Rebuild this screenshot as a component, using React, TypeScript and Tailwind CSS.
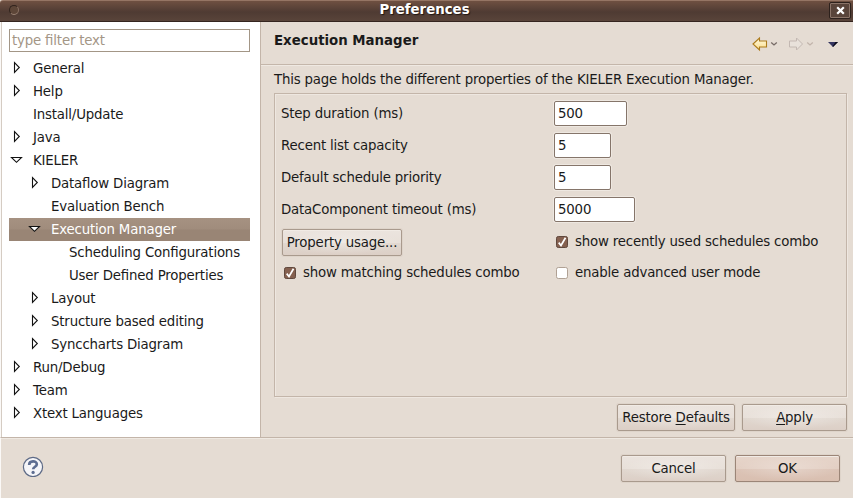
import type { ReactNode } from 'react';

type TreeItem = { label: string; depth: 0 | 1 | 2; state?: 'open' | 'closed'; selected?: boolean };

const tree: TreeItem[] = [
  { label: 'General', depth: 0, state: 'closed' },
  { label: 'Help', depth: 0, state: 'closed' },
  { label: 'Install/Update', depth: 0 },
  { label: 'Java', depth: 0, state: 'closed' },
  { label: 'KIELER', depth: 0, state: 'open' },
  { label: 'Dataflow Diagram', depth: 1, state: 'closed' },
  { label: 'Evaluation Bench', depth: 1 },
  { label: 'Execution Manager', depth: 1, state: 'open', selected: true },
  { label: 'Scheduling Configurations', depth: 2 },
  { label: 'User Defined Properties', depth: 2 },
  { label: 'Layout', depth: 1, state: 'closed' },
  { label: 'Structure based editing', depth: 1, state: 'closed' },
  { label: 'Synccharts Diagram', depth: 1, state: 'closed' },
  { label: 'Run/Debug', depth: 0, state: 'closed' },
  { label: 'Team', depth: 0, state: 'closed' },
  { label: 'Xtext Languages', depth: 0, state: 'closed' },
];

const indent = { 0: 'pl-0', 1: 'pl-[18px]', 2: 'pl-[36px]' };

function Expander({ state }: { state?: 'open' | 'closed' }) {
  return (
    <svg width="24" height="23" viewBox="0 0 24 23" className="shrink-0">
      {state === 'closed' && <path d="M5.5 5.5V15.5L10.3 10.5Z" fill="#fff" stroke="#111" strokeWidth="1.1" />}
      {state === 'open' && <path d="M2.5 8.5H12.5L7.5 13.3Z" fill="#fff" stroke="#111" strokeWidth="1.1" />}
    </svg>
  );
}

function TreeRow({ item }: { item: TreeItem }) {
  return (
    <div
      className={`flex h-[23px] items-center whitespace-nowrap ${indent[item.depth]} ${
        item.selected
          ? 'bg-linear-to-b from-[#a69282] from-0% via-[#a08c7c] via-48% to-[#998575] to-52% text-white'
          : ''
      }`}
    >
      <Expander state={item.state} />
      <span className="leading-[23px]">{item.label}</span>
    </div>
  );
}

function Button({ children, className, primary }: { children: ReactNode; className: string; primary?: boolean }) {
  return (
    <button
      className={`flex h-[27px] items-center justify-center whitespace-nowrap rounded-[2px] border tracking-[-0.18px] ${
        primary
          ? 'border-[#9b8577] bg-[radial-gradient(ellipse_at_center,#ffffff40,#ffffff00_70%),linear-gradient(#e6d5ca,#e3cfc3_50%,#dcc4b7_50%,#d9bfb0)]'
          : 'border-[#a99a8d] bg-[radial-gradient(ellipse_at_center,#ffffff50,#ffffff00_70%),linear-gradient(#ebe4de,#e8e0d9_50%,#e1d8d0_50%,#dccfc6)]'
      } shadow-[0_0_0_1px_#ded4ca,inset_0_1px_0_#f1ebe5] ${className}`}
    >
      {children}
    </button>
  );
}

function Check({ label, checked }: { label: string; checked?: boolean }) {
  return (
    <label className="flex h-4 items-center whitespace-nowrap">
      <svg width="12" height="14" viewBox="0 0 12 14" className="mr-[7px] shrink-0">
        <rect
          x="0.5"
          y="1.5"
          width="11"
          height="11"
          rx="1.8"
          fill={checked ? '#85604f' : '#fff'}
          stroke={checked ? '#60483d' : '#b0a194'}
        />
        {checked && <path d="M2.7 7.6L5 10.5L9.5 2.8" fill="none" stroke="#fff" strokeWidth="1.7" />}
      </svg>
      <span>{label}</span>
    </label>
  );
}

function Field({ label, value, width }: { label: string; value: string; width: string }) {
  return (
    <div className="flex h-8 items-start">
      <span className="w-[273px] leading-[25px]">{label}</span>
      <div
        className={`h-[25px] rounded-[2px] border border-[#85756a] bg-white pl-[3px] leading-[23px] shadow-[0_0_0_1px_#eee8e1] ${width}`}
      >
        {value}
      </div>
    </div>
  );
}

function Toolbar() {
  return (
    <svg width="92" height="18" viewBox="0 0 92 18">
      <defs>
        <linearGradient id="back" x1="0" y1="0" x2="0" y2="1">
          <stop offset="0" stopColor="#fffbe4" />
          <stop offset="1" stopColor="#fbdc86" />
        </linearGradient>
      </defs>
      <path d="M1 9L7.5 3V6H14.5V12H7.5V15Z" fill="url(#back)" stroke="#ac7c1d" strokeWidth="1.1" />
      <path d="M19.2 7.5L22 10L24.8 7.5" fill="none" stroke="#776b66" strokeWidth="1.3" />
      <path d="M50.5 9L44.5 3V6H37.5V12H44.5V15Z" fill="#e8e1da" stroke="#c3b8b2" />
      <path d="M55.2 7.5L58 10L60.8 7.5" fill="none" stroke="#c2b4ab" strokeWidth="1.3" />
      <path d="M76 7H86L81 12Z" fill="#34345f" />
      <path d="M81 12L86 7H83.5L80.5 11.5Z" fill="#0b0b18" />
    </svg>
  );
}

export default function App() {
  return (
    <div className="flex h-[498px] w-[853px] flex-col overflow-hidden bg-[#e5dcd3] font-['DejaVu_Sans',sans-serif] text-[13.33px] tracking-[-0.18px] text-[#1a1a1a] [font-feature-settings:'liga'_1]">
      <header className="grid h-[22px] shrink-0 grid-cols-[1fr_auto_1fr] items-center rounded-tl-[3px] border-b border-t border-b-[#35251f] border-t-[#957564] bg-linear-to-b from-[#6f5041] via-[#4f3b33] via-55% to-[#59443a]">
        <div className="mb-[2px] ml-[9px] h-[10px] w-[10px] rounded-full border border-[#30231d] border-b-[#9a8375] border-r-[#8a7163] bg-[#5d4638]" />
        <h1 className="ml-[-4px] pb-[3px] text-[13.33px] font-bold leading-4 tracking-normal text-white [text-shadow:1px_1px_1px_#201612]">
          Preferences
        </h1>
        <div className="mb-px mr-[2px] flex h-[17px] w-[22px] items-center justify-center justify-self-end rounded-[2px] border border-[#2d211c] bg-[#59443a] shadow-[inset_0_0_0_1px_#8b7468]">
          <svg width="9" height="9" viewBox="0 0 9 9">
            <path d="M1.2 1.2L7.8 7.8M7.8 1.2L1.2 7.8" stroke="#fff" strokeWidth="2.2" />
          </svg>
        </div>
      </header>
      <div className="flex h-[415px] shrink-0 border-l border-[#fbf9f7]">
        <aside className="w-[260px] shrink-0 border-l border-r border-l-[#d5ccc3] border-r-[#c3b5a9] bg-white pl-[7px] pr-[10px] pt-[7px]">
          <div className="mb-[5px] h-[23px] border border-[#a39686] pl-[2px] leading-[21px] text-[#a39686]">type filter text</div>
          <div>
            {tree.map((item) => (
              <TreeRow key={item.label} item={item} />
            ))}
          </div>
        </aside>
        <main className="flex flex-1 flex-col">
          <div className="flex h-[43px] shrink-0 items-start justify-between border-b border-[#c4b6aa] pl-[13px] pr-[9px] shadow-[0_1px_0_#efe9e2]">
            <h2 className="pt-[11px] text-[13.33px] font-bold leading-4 tracking-normal">Execution Manager</h2>
            <div className="pt-[13px]">
              <Toolbar />
            </div>
          </div>
          <p className="h-[28px] whitespace-nowrap pl-[13px] pt-[7px] leading-4">
            This page holds the different properties of the KIELER Execution Manager.
          </p>
          <section className="ml-[13px] h-[304px] w-[573px] shrink-0 border border-[#c3b5a9] pl-[6px] pt-[7px] shadow-[inset_1px_1px_0_#eee7e0,1px_1px_0_#eee7e0]">
            <Field label="Step duration (ms)" value="500" width="w-[73px]" />
            <Field label="Recent list capacity" value="5" width="w-[57px]" />
            <Field label="Default schedule priority" value="5" width="w-[57px]" />
            <Field label="DataComponent timeout (ms)" value="5000" width="w-[81px]" />
            <div className="flex h-[35px] items-start">
              <div className="w-[275px] pl-px">
                <Button className="w-[120px]">Property usage...</Button>
              </div>
              <div className="pt-[5px]">
                <Check label="show recently used schedules combo" checked />
              </div>
            </div>
            <div className="flex pt-px">
              <div className="w-[275px] pl-[3px]">
                <Check label="show matching schedules combo" checked />
              </div>
              <Check label="enable advanced user mode" />
            </div>
          </section>
          <div className="flex justify-end gap-[7px] pr-[6px] pt-[7px]">
            <Button className="w-[118px]">
              <span>
                Restore <u className="underline-offset-2">D</u>efaults
              </span>
            </Button>
            <Button className="w-[105px]">
              <span>
                <u className="underline-offset-2">A</u>pply
              </span>
            </Button>
          </div>
        </main>
      </div>
      <footer className="flex flex-1 items-start border-l border-t border-l-[#fbf9f7] border-t-[#c3b5a9] pr-[13px] pt-[17px] shadow-[inset_0_1px_0_#efe9e2]">
        <svg width="22" height="22" viewBox="0 0 22 22" className="ml-[21px]">
          <circle cx="11" cy="12" r="9.6" fill="#f5f5f8" stroke="#5d6a86" strokeWidth="1.2" />
          <path d="M7.2 9.9C7.2 5.2 14.8 5.3 14.8 9.2C14.8 11.8 11.2 11.7 11.2 14.3" fill="none" stroke="#5d6d91" strokeWidth="2.7" />
          <circle cx="11.1" cy="17.4" r="1.6" fill="#5d6d91" />
        </svg>
        <div className="ml-auto flex gap-[9px]">
          <Button className="w-[105px]">Cancel</Button>
          <Button primary className="w-[105px]">
            OK
          </Button>
        </div>
      </footer>
    </div>
  );
}
